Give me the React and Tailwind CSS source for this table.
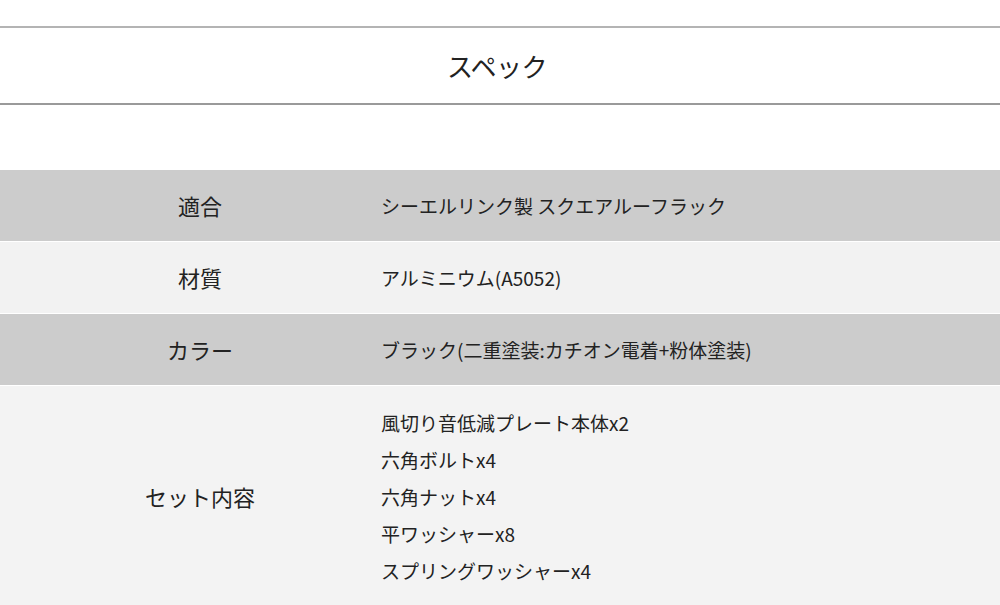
export default function App() {
  const rows = [
    { label: '適合', value: ['シーエルリンク製 スクエアルーフラック'], bg: 'bg-[#cccccc]' },
    { label: '材質', value: ['アルミニウム(A5052)'], bg: 'bg-[#f2f2f2]' },
    { label: 'カラー', value: ['ブラック(二重塗装:カチオン電着+粉体塗装)'], bg: 'bg-[#cccccc]' },
    {
      label: 'セット内容',
      value: ['風切り音低減プレート本体x2', '六角ボルトx4', '六角ナットx4', '平ワッシャーx8', 'スプリングワッシャーx4'],
      bg: 'bg-[#f3f3f3]',
    },
  ];

  return (
    <div className="w-[1000px] h-[605px] bg-white text-[#222] font-['Noto_Sans_CJK_JP','Noto_Sans',sans-serif] overflow-hidden">
      <div className="pt-[26px]">
        <div className="border-t-2 border-b-2 border-t-[#b4b4b4] border-b-[#9a9a9a] h-[79px] flex items-center justify-center">
          <h2 className="text-[26px] leading-none tracking-[-0.5px] -ml-[6px]">スペック</h2>
        </div>
      </div>

      <div className="mt-[65px] flex flex-col gap-[1px]">
        {rows.map((row) => (
          <div key={row.label} className={`${row.bg} flex ${row.value.length > 1 ? 'pt-[18px] pb-[16px]' : 'h-[71px]'}`}>
            <div className="w-[400px] flex items-center justify-center text-[22px]">{row.label}</div>
            <div className="flex flex-col justify-center -ml-[19px] text-[19px] leading-[37px]">
              {row.value.map((v) => (
                <div key={v}>{v}</div>
              ))}
            </div>
          </div>
        ))}
      </div>
    </div>
  );
}
